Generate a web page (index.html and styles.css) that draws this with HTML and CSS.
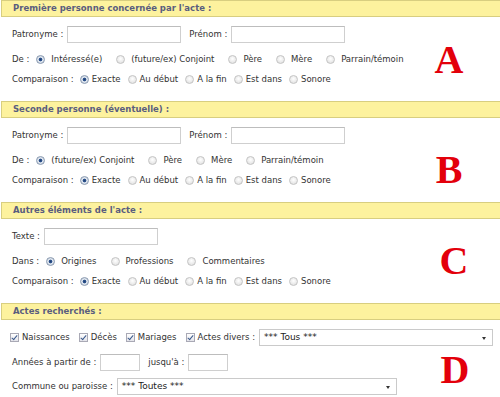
FILE: index.html
```html
<!DOCTYPE html>
<html lang="fr">
<head>
  <meta charset="UTF-8" />
  <title>Recherche d'actes</title>
  <link rel="stylesheet" href="styles.css">
</head>
<body>
  <form class="search">

    <div class="section sec-a">
      <div class="band">Première personne concernée par l'acte :</div>
      <div class="row first">
        <label>Patronyme :</label>
        <input type="text" class="name">
        <label class="after">Prénom :</label>
        <input type="text" class="name">
      </div>
      <div class="row wide">
        <label>De :</label>
        <span class="opt"><input type="radio" name="r1" checked>Intéressé(e)</span>
        <span class="opt"><input type="radio" name="r1">(future/ex) Conjoint</span>
        <span class="opt"><input type="radio" name="r1">Père</span>
        <span class="opt"><input type="radio" name="r1">Mère</span>
        <span class="opt"><input type="radio" name="r1">Parrain/témoin</span>
      </div>
      <div class="row tight">
        <label>Comparaison :</label>
        <span class="opt"><input type="radio" name="c1" checked>Exacte</span>
        <span class="opt"><input type="radio" name="c1">Au début</span>
        <span class="opt"><input type="radio" name="c1">A la fin</span>
        <span class="opt"><input type="radio" name="c1">Est dans</span>
        <span class="opt"><input type="radio" name="c1">Sonore</span>
      </div>
      <span class="tag">A</span>
    </div>

    <div class="section sec-b">
      <div class="band">Seconde personne (éventuelle) :</div>
      <div class="row first">
        <label>Patronyme :</label>
        <input type="text" class="name">
        <label class="after">Prénom :</label>
        <input type="text" class="name">
      </div>
      <div class="row wide">
        <label>De :</label>
        <span class="opt"><input type="radio" name="r2" checked>(future/ex) Conjoint</span>
        <span class="opt"><input type="radio" name="r2">Père</span>
        <span class="opt"><input type="radio" name="r2">Mère</span>
        <span class="opt"><input type="radio" name="r2">Parrain/témoin</span>
      </div>
      <div class="row tight">
        <label>Comparaison :</label>
        <span class="opt"><input type="radio" name="c2" checked>Exacte</span>
        <span class="opt"><input type="radio" name="c2">Au début</span>
        <span class="opt"><input type="radio" name="c2">A la fin</span>
        <span class="opt"><input type="radio" name="c2">Est dans</span>
        <span class="opt"><input type="radio" name="c2">Sonore</span>
      </div>
      <span class="tag">B</span>
    </div>

    <div class="section sec-c">
      <div class="band">Autres éléments de l'acte :</div>
      <div class="row first">
        <label>Texte :</label>
        <input type="text" class="name">
      </div>
      <div class="row wide">
        <label>Dans :</label>
        <span class="opt"><input type="radio" name="d3" checked>Origines</span>
        <span class="opt"><input type="radio" name="d3">Professions</span>
        <span class="opt"><input type="radio" name="d3">Commentaires</span>
      </div>
      <div class="row tight">
        <label>Comparaison :</label>
        <span class="opt"><input type="radio" name="c3" checked>Exacte</span>
        <span class="opt"><input type="radio" name="c3">Au début</span>
        <span class="opt"><input type="radio" name="c3">A la fin</span>
        <span class="opt"><input type="radio" name="c3">Est dans</span>
        <span class="opt"><input type="radio" name="c3">Sonore</span>
      </div>
      <span class="tag">C</span>
    </div>

    <div class="section sec-d">
      <div class="band">Actes recherchés :</div>
      <div class="row first checks">
        <span class="opt"><input type="checkbox" checked>Naissances</span>
        <span class="opt"><input type="checkbox" checked>Décès</span>
        <span class="opt"><input type="checkbox" checked>Mariages</span>
        <span class="opt"><input type="checkbox" checked>Actes divers :</span>
        <span class="select divers">*** Tous ***</span>
      </div>
      <div class="row">
        <label>Années à partir de :</label>
        <input type="text" class="year">
        <label class="after">jusqu'à :</label>
        <input type="text" class="year">
      </div>
      <div class="row last">
        <label>Commune ou paroisse :</label>
        <span class="select commune">*** Toutes ***</span>
      </div>
      <span class="tag">D</span>
    </div>

  </form>
</body>
</html>
```

FILE: styles.css
```css
* {
  box-sizing: border-box;
}

body, html {
  margin: 0;
  background-color: white;
  font-family: "DejaVu Sans", Verdana, sans-serif;
  font-size: 8.5px;
  color: #333;
  overflow: hidden;
}

.section {
  position: relative;
  padding-bottom: 12px;
}

.band {
  height: 17px;
  line-height: 15px;
  padding-left: 11px;
  margin-left: 1px;
  background-color: #fdf29e;
  border: 1px solid #d8ce80;
  border-right: none;
  color: #595d7e;
  font-weight: bold;
}

.row {
  display: flex;
  align-items: center;
  height: 20px;
  padding-left: 12px;
  white-space: nowrap;
}

.row + .row {
  margin-top: 5px;
}

.row.tight {
  margin-top: 0;
}

.row.first {
  margin-top: 7px;
}

.row.last {
  margin-top: 4px;
}

input[type="text"] {
  height: 17px;
  border: 1px solid #cfcfcf;
  border-top-color: #bdbdbd;
  background: white;
  margin: 0 0 0 4px;
  padding: 0;
}

input.name {
  width: 114px;
}

input.year {
  width: 40px;
}

label.after {
  margin-left: 8px;
}

.opt {
  display: inline-flex;
  align-items: center;
}

input[type="radio"] {
  appearance: none;
  width: 9px;
  height: 9px;
  margin: 0;
  border-radius: 50%;
  border: 1px solid #c4c4c4;
  background: radial-gradient(circle at 50% 40%, #ffffff 0%, #e6e6e6 70%, #d2d2d2 100%);
}

input[type="radio"]:checked {
  border-color: #8a9ab0;
  background: radial-gradient(circle at 50% 50%, #1f3f72 0%, #2f5590 30%, #dfe6ef 45%, #c9d2de 100%);
}

.wide .opt input {
  margin: 0 6px 0 7px;
}

.wide .opt + .opt input {
  margin-left: 14px;
}

.tight .opt input {
  margin: 0 3px 0 6px;
}

.tight .opt + .opt input {
  margin-left: 7px;
}

.checks {
  padding-left: 10px;
}

input[type="checkbox"] {
  appearance: none;
  position: relative;
  width: 9px;
  height: 9px;
  margin: 0 3px 0 0;
  border: 1px solid #a9a9b5;
  background: linear-gradient(#ffffff, #e4e4ea);
}

input[type="checkbox"]:checked::after {
  content: "";
  position: absolute;
  left: 2px;
  top: 0;
  width: 2px;
  height: 5px;
  border: solid #3b5a8c;
  border-width: 0 1.5px 1.5px 0;
  transform: rotate(40deg);
}

.checks .opt + .opt input {
  margin-left: 9px;
}

.select {
  position: relative;
  display: inline-block;
  height: 17px;
  line-height: 15px;
  padding-left: 4px;
  margin-left: 4px;
  border: 1px solid #cacaca;
  background: white;
  color: #222;
  font-size: 9px;
}

.select::after {
  content: "";
  position: absolute;
  right: 6px;
  top: 7px;
  border: 2.5px solid transparent;
  border-top: 3px solid #333;
}

.select.divers {
  width: 234px;
}

.select.commune {
  width: 280px;
}

.tag {
  position: absolute;
  width: 40px;
  text-align: center;
  font-family: "Liberation Serif", "Times New Roman", serif;
  font-weight: bold;
  font-size: 40px;
  line-height: 40px;
  color: #e3000b;
}

.sec-a .tag {
  top: 40px;
  left: 429px;
}

.sec-b .tag {
  top: 49px;
  left: 429px;
}

.sec-c .tag {
  top: 39px;
  left: 434px;
}

.sec-d .tag {
  top: 47px;
  left: 435px;
}
```
